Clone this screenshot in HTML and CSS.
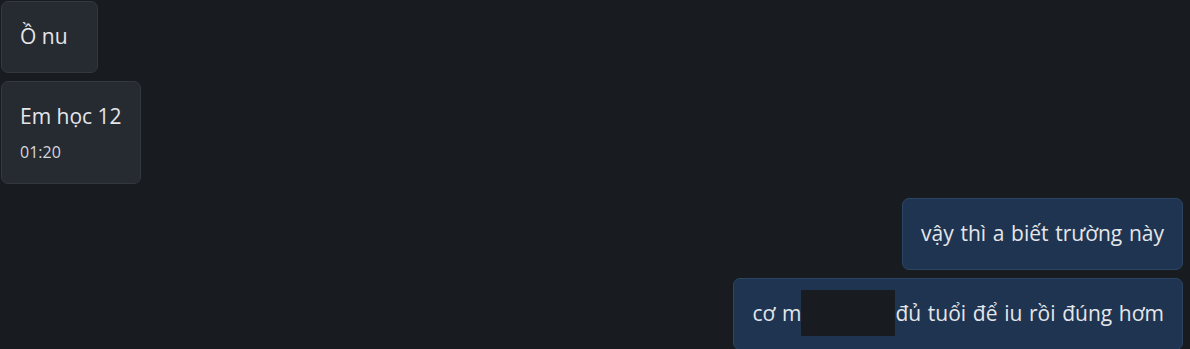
FILE: index.html
```html
<!DOCTYPE html>
<html lang="vi">
<head>
<meta charset="utf-8">
<link rel="stylesheet" href="styles.css">
</head>
<body>
<div class="chat">
  <div class="msg in short">
    <div class="text">Ồ nu</div>
  </div>
  <div class="msg in">
    <div class="text">Em học 12</div>
    <div class="time">01:20</div>
  </div>
  <div class="msg out first">
    <div class="text">vậy thì a biết trường này</div>
  </div>
  <div class="msg out">
    <div class="text">cơ m<span class="redact"></span>đủ tuổi để iu rồi đúng hơm</div>
  </div>
</div>
</body>
</html>
```

FILE: styles.css
```css
html, body {
  margin: 0;
  padding: 0;
  background: #181b20;
  height: 100%;
}
body {
  font-family: "Open Sans", "Noto Sans", sans-serif;
  color: #e4e6ea;
  overflow: hidden;
}
.chat {
  display: flex;
  flex-direction: column;
  align-items: flex-start;
  gap: 8px;
  padding: 0 7px 0 1px;
}
.msg {
  box-sizing: border-box;
  border-radius: 7px;
  border: 1px solid #33373e;
  background: #262a31;
  padding: 20px 18px 21px;
}
.msg.short {
  margin-top: 1px;
  min-width: 97px;
}
.msg.in .text {
  word-spacing: 0;
}
.msg.out {
  align-self: flex-end;
  background: #1f3450;
  border-color: #2c4562;
}
.msg.first {
  margin-top: 6px;
}
.text {
  font-size: 21px;
  line-height: 29px;
  word-spacing: 1.2px;
  white-space: nowrap;
}
.time {
  font-size: 16px;
  line-height: 20px;
  margin-top: 11px;
  color: #d4d7dc;
}
.redact {
  display: inline-block;
  position: relative;
  width: 94px;
  height: 29px;
  vertical-align: top;
}
.redact::before {
  content: "";
  position: absolute;
  left: 0;
  right: 0;
  top: -9px;
  bottom: -8px;
  background: #181b20;
}
```
